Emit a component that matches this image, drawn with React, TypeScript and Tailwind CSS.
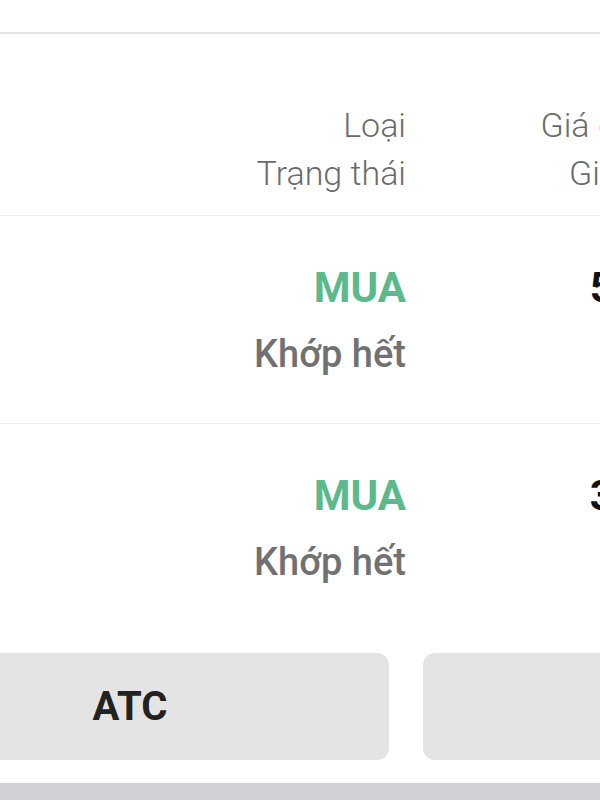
type OrderRow = {
  side: string;
  status: string;
  price: string;
};

const rows: OrderRow[] = [
  { side: "MUA", status: "Khớp hết", price: "5.3" },
  { side: "MUA", status: "Khớp hết", price: "3.1" },
];

export default function App() {
  return (
    <div className="w-[600px] h-[800px] overflow-hidden bg-white flex flex-col font-['Roboto',sans-serif]">
      {/* top strip */}
      <div className="h-[32px] shrink-0 bg-white" />
      <div className="h-[2px] shrink-0 bg-[#e4e4e4]" />

      {/* table header */}
      <div className="flex shrink-0 pt-[67px] pb-[18px] border-b border-[#eeeeee]">
        <div className="w-[406px] shrink-0 flex flex-col items-end text-[34px] leading-[48px] font-light text-[#6b6b6b]">
          <span>Loại</span>
          <span>Trạng thái</span>
        </div>
        <div className="w-[375px] shrink-0 flex flex-col items-center text-[34px] leading-[48px] font-light text-[#6b6b6b]">
          <span>Giá đặt</span>
          <span>Giá</span>
        </div>
      </div>

      {/* rows */}
      {rows.map((row, i) => (
        <div
          key={i}
          className={`flex shrink-0 pt-[48px] pb-[45px] ${i < rows.length - 1 ? "border-b border-[#eeeeee]" : ""}`}
        >
          <div className="w-[406px] shrink-0 flex flex-col items-end">
            <span className="text-[42px] leading-[48px] font-bold text-[#5bb98b]">{row.side}</span>
            <span className="mt-[18px] text-[38px] leading-[48px] font-medium text-[#717171]">{row.status}</span>
          </div>
          <div className="w-[244px] shrink-0 flex flex-col items-end">
            <span className="text-[42px] leading-[48px] font-bold text-[#111]">{row.price}</span>
            <span className="mt-[18px] h-[48px]" />
          </div>
        </div>
      ))}

      {/* order type buttons */}
      <div className="flex gap-[34px] ml-[-129px] mt-[22px] shrink-0">
        <button className="w-[518px] h-[107px] shrink-0 rounded-[12px] bg-[#e4e4e4] text-[40px] font-bold text-[#222]">
          ATC
        </button>
        <button className="w-[518px] h-[107px] shrink-0 rounded-[12px] bg-[#e4e4e4] text-[40px] font-bold text-[#222]">
          ATO
        </button>
      </div>

      <div className="flex-1" />
      <div className="h-[17px] shrink-0 bg-[#d1d2d6]" />
    </div>
  );
}
